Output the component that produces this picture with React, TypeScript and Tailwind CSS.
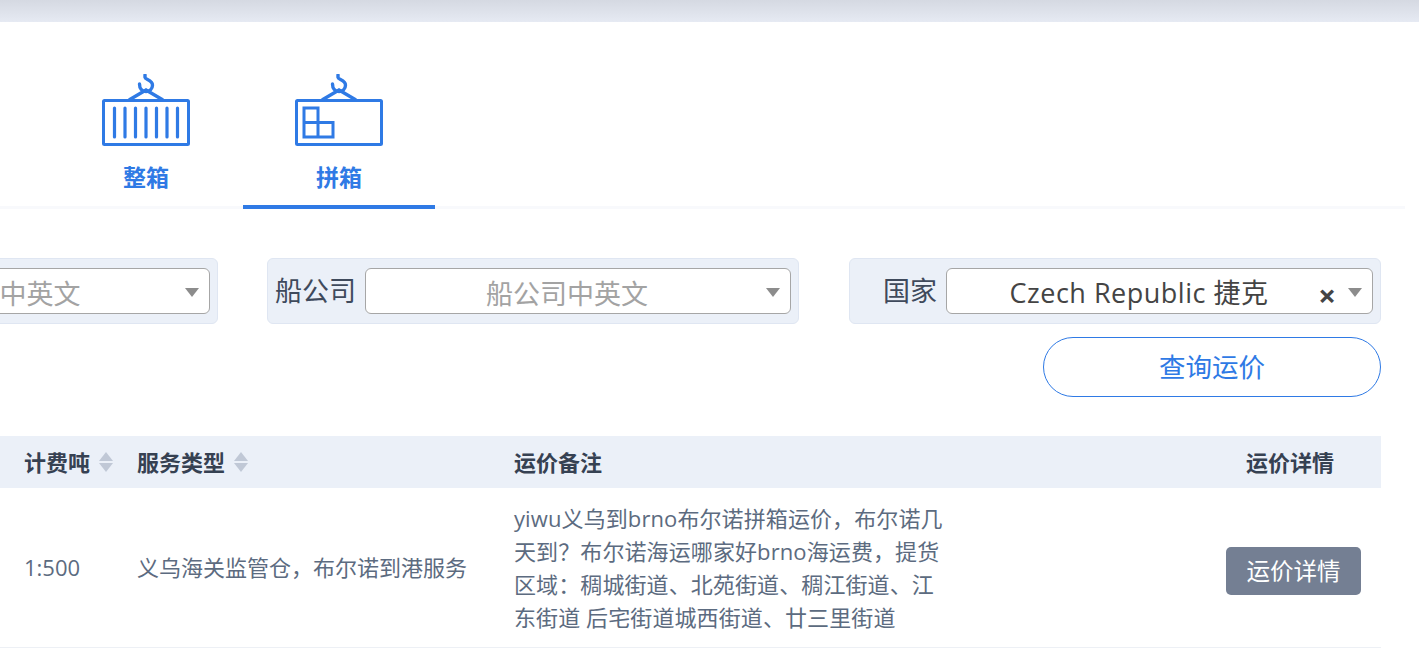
import React from "react";

const font = "font-['Open_Sans','Noto_Sans_CJK_SC',sans-serif]";

function ContainerIcon({ full }: { full: boolean }) {
  return (
    <svg width="88" height="74" viewBox="0 0 88 74" fill="none" stroke="#2f7ae5" strokeWidth="3">
      {/* hook and sling */}
      <path d="M43 1 V3.5 C43 5.5 50.5 6 50.5 11 C50.5 15 47.5 17.5 44 17.5 C40 17.5 37.5 14.5 37.5 10" strokeLinecap="round" strokeWidth="3.4" />
      <path d="M27 26 L44 16 L61 26" strokeWidth="3.4" />
      <rect x="1.5" y="26.5" width="85" height="44" rx="1" strokeLinejoin="round" />
      {full ? (
        <g strokeLinecap="round" strokeWidth="3.2">
          <path d="M12.5 34 V63" />
          <path d="M23 34 V63" />
          <path d="M33.5 34 V63" />
          <path d="M44 34 V63" />
          <path d="M54.5 34 V63" />
          <path d="M65 34 V63" />
          <path d="M75.5 34 V63" />
        </g>
      ) : (
        <path d="M9 34 H23 V63 H9 Z M9 48.5 H38 V63 H23 V34" />
      )}
    </svg>
  );
}

function Tab({ label, active, full }: { label: string; active?: boolean; full: boolean }) {
  return (
    <div className={`w-[192px] h-[187px] flex flex-col items-center pt-[52px] border-b-[4px] ${active ? "border-[#2f7ae5]" : "border-transparent"}`}>
      <ContainerIcon full={full} />
      <span className="mt-[11px] text-[23px] leading-[36px] font-bold text-[#2f7ae5]">{label}</span>
    </div>
  );
}

function Caret() {
  return <span className="w-0 h-0 border-x-[7px] border-x-transparent border-t-[9px] border-t-[#8c8c8c]" />;
}

function Filter({ label, placeholder, value, labelClass, className = "" }: { label: string; placeholder?: string; value?: string; labelClass: string; className?: string }) {
  return (
    <div className={`w-[532px] h-[66px] shrink-0 flex items-center pl-[6px] pr-[7px] bg-[#ebf0f8] border border-[#dfe6f2] rounded-[6px] ${className}`}>
      <span className={`text-[27px] pt-[1px] text-[#3f4a5c] text-right shrink-0 pr-[9px] ${labelClass}`}>{label}</span>
      <div className={`relative flex-1 h-[46px] bg-white border border-[#a6a6a6] rounded-[6px] flex items-center justify-center pr-[22px] ${value ? "pt-[5px]" : "pt-[7px]"}`}>
        <span className={`text-[27px] whitespace-nowrap ${value ? "text-[#444444] pr-[19px] tracking-[0.5px]" : "text-[#a3a3a3]"}`}>{value ?? placeholder}</span>
        {value && <span className="absolute right-[36px] top-[10px] text-[31px] leading-[32px] font-bold text-[#444444]">×</span>}
        <span className="absolute right-[10px] top-[19px] flex">
          <Caret />
        </span>
      </div>
    </div>
  );
}

function SortIcon() {
  return (
    <span className="inline-flex flex-col gap-[2px] ml-[9px]">
      <span className="w-0 h-0 border-x-[7px] border-x-transparent border-b-[9px] border-b-[#c0c8d6]" />
      <span className="w-0 h-0 border-x-[7px] border-x-transparent border-t-[9px] border-t-[#c0c8d6]" />
    </span>
  );
}

export default function App() {
  return (
    <div className={`w-[1419px] h-[649px] overflow-hidden bg-white ${font}`}>
      <div className="h-[22px] bg-gradient-to-b from-[#d5d9e2] to-[#e6eaf3]" />

      <div className="w-[1405px] h-[187px] flex gap-[1px] pl-[50px] border-b-[3px] border-[#f8f9fc]">
        <Tab label="整箱" full />
        <Tab label="拼箱" active full={false} />
      </div>

      <div className="mt-[49px] flex justify-end gap-[50px] pr-[38px]">
        <Filter label="目的港口" placeholder="目的港中英文" labelClass="w-[118px]" className="-mr-[1px]" />
        <Filter label="船公司" placeholder="船公司中英文" labelClass="w-[91px]" />
        <Filter label="国家" value="Czech Republic 捷克" labelClass="w-[90px]" />
      </div>

      <div className="mt-[13px] flex justify-end pr-[38px]">
        <button className="w-[338px] h-[60px] pt-[1px] rounded-full border border-[#2f7ae5] text-[26.5px] text-[#2f7ae5] bg-white">查询运价</button>
      </div>

      <div className="mt-[39px] w-[1381px]">
        <div className="h-[52px] flex items-center bg-[#ebf0f8] text-[22px] font-bold text-[#364152]">
          <div className="w-[137px] pl-[24px] flex items-center">计费吨<SortIcon /></div>
          <div className="w-[377px] flex items-center">服务类型<SortIcon /></div>
          <div className="w-[688px]">运价备注</div>
          <div className="flex-1 text-center pr-[3px]">运价详情</div>
        </div>
        <div className="h-[160px] flex items-center border-b border-[#edf0f5] text-[22px] text-[#5c6b80]">
          <div className="w-[137px] pl-[24px]">1:500</div>
          <div className="w-[377px]">义乌海关监管仓，布尔诺到港服务</div>
          <div className="w-[712px] leading-[33px] tracking-[0.1px]">
            <p className="w-[432px]">
              yiwu义乌到brno布尔诺拼箱运价，布尔诺几天到？布尔诺海运哪家好brno海运费，提货区域：稠城街道、北苑街道、稠江街道、江东街道 后宅街道城西街道、廿三里街道
            </p>
          </div>
          <button className="w-[135px] h-[48px] mt-[6px] pt-[2px] rounded-[5px] bg-[#747f93] text-[23.5px] text-white">运价详情</button>
        </div>
      </div>
    </div>
  );
}
